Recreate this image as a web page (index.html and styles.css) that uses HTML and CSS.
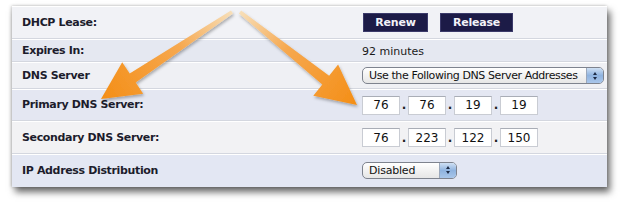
FILE: index.html
```html
<!DOCTYPE html>
<html>
<head>
<meta charset="utf-8">
<link rel="stylesheet" href="styles.css">
</head>
<body>
<div class="panel">
  <div class="row r1">
    <div class="label">DHCP Lease:</div>
    <div class="value"><span class="btn">Renew</span><span class="btn">Release</span></div>
  </div>
  <div class="row r2">
    <div class="label">Expires In:</div>
    <div class="value text">92 minutes</div>
  </div>
  <div class="row r3">
    <div class="label">DNS Server</div>
    <div class="value"><div class="select wide"><span class="sel-text">Use the Following DNS Server Addresses</span><span class="stepper"><i class="up"></i><i class="down"></i></span></div></div>
  </div>
  <div class="row r4">
    <div class="label">Primary DNS Server:</div>
    <div class="value ip"><span class="box">76</span><span class="dot">.</span><span class="box">76</span><span class="dot">.</span><span class="box">19</span><span class="dot">.</span><span class="box">19</span></div>
  </div>
  <div class="row r5">
    <div class="label">Secondary DNS Server:</div>
    <div class="value ip"><span class="box">76</span><span class="dot">.</span><span class="box">223</span><span class="dot">.</span><span class="box">122</span><span class="dot">.</span><span class="box">150</span></div>
  </div>
  <div class="row r6">
    <div class="label">IP Address Distribution</div>
    <div class="value"><div class="select narrow"><span class="sel-text">Disabled</span><span class="stepper"><i class="up"></i><i class="down"></i></span></div></div>
  </div>
</div>
<svg class="arrows" width="620" height="205" viewBox="0 0 620 205">
  <defs>
    <linearGradient id="gl" x1="232" y1="12" x2="101" y2="99" gradientUnits="userSpaceOnUse">
      <stop offset="0" stop-color="#f7dfb9"/>
      <stop offset="0.4" stop-color="#f6a84f"/>
      <stop offset="1" stop-color="#f48e16"/>
    </linearGradient>
    <linearGradient id="gr" x1="240" y1="12" x2="357" y2="105" gradientUnits="userSpaceOnUse">
      <stop offset="0" stop-color="#f7dfb9"/>
      <stop offset="0.4" stop-color="#f6a84f"/>
      <stop offset="1" stop-color="#f48e16"/>
    </linearGradient>
    <filter id="sh" x="-20%" y="-20%" width="140%" height="140%">
      <feDropShadow dx="1" dy="2" stdDeviation="1.5" flood-color="#000" flood-opacity="0.3"/>
    </filter>
  </defs>
  <polygon filter="url(#sh)" fill="url(#gl)" points="231,10.5 129.7,73.4 122.2,62.2 101,99 143.2,93.8 135.7,82.6 233,13.5"/>
  <polygon filter="url(#sh)" fill="url(#gr)" points="241.1,10.6 329.1,75.8 338.1,64.4 357,105 313.3,95.8 322.3,84.4 238.9,13.4"/>
</svg>
</body>
</html>
```

FILE: styles.css
```css
html, body {
  margin: 0;
  padding: 0;
  background: #ffffff;
  width: 620px;
  height: 205px;
  overflow: hidden;
}
body {
  position: relative;
  padding-top: 6px;
  padding-left: 12px;
  box-sizing: border-box;
  font-family: "DejaVu Sans", Verdana, sans-serif;
}
.panel {
  width: 595px;
  background: #eef0f4;
  box-shadow: 3px 5px 7px rgba(0,0,0,0.6), -1px 0 3px rgba(0,0,0,0.18), 0 -1px 2px rgba(0,0,0,0.06);
}
.row {
  display: grid;
  grid-template-columns: 350px 1fr;
  align-items: center;
  border-top: 1px solid #d4d7df;
  box-shadow: inset 0 1px 0 #ffffff;
  box-sizing: border-box;
}
.r1 { height: 32px; border-top: none; background: #f1f2f6; }
.r2 { height: 23px; background: #e5e8f1; }
.r3 { height: 27px; background: #eff0f4; }
.r4 { height: 32px; background: #e4e7f2; }
.r5 { height: 33px; background: #f2f2f4; }
.r6 { height: 34px; background: #e3e7f3; }
.label {
  padding-left: 10px;
  font-weight: bold;
  font-size: 11px;
  letter-spacing: -0.35px;
  color: #1c1c2c;
}
.value {
  display: flex;
  align-items: center;
}
.text {
  font-size: 11px;
  color: #1a1a1a;
  padding-top: 2px;
}
.r1 .value { gap: 12px; padding-left: 1px; padding-top: 1px; }
.btn {
  display: inline-flex;
  align-items: center;
  justify-content: center;
  height: 19px;
  box-sizing: border-box;
  background: #1c1b47;
  border: 1px solid #3b3a6a;
  color: #f2f2f8;
  font-weight: bold;
  font-size: 11px;
  letter-spacing: -0.2px;
}
.btn:first-child { width: 65px; }
.btn:last-child { width: 73px; }
.select {
  display: flex;
  align-items: center;
  height: 17px;
  box-sizing: border-box;
  border: 1px solid #7e838e;
  border-radius: 5px;
  background: linear-gradient(#ffffff, #f2f2f2 50%, #e6e6e6);
  overflow: hidden;
  position: relative;
}
.wide { width: 242px; margin-top: 1px; }
.narrow { width: 95px; margin-top: -1px; }
.sel-text {
  flex: 1;
  padding-left: 6px;
  font-size: 11px;
  letter-spacing: -0.4px;
  color: #111;
  white-space: nowrap;
}
.narrow .sel-text { letter-spacing: -0.2px; }
.stepper {
  width: 16px;
  height: 100%;
  background: linear-gradient(#cfe0f4, #8fb3df 50%, #a9c6ea);
  border-left: 1px solid #9aa7bb;
  display: flex;
  flex-direction: column;
  align-items: center;
  justify-content: center;
  gap: 2px;
}
.stepper i {
  display: block;
  width: 0;
  height: 0;
  border-left: 2.5px solid transparent;
  border-right: 2.5px solid transparent;
}
.stepper .up { border-bottom: 3px solid #1d2b45; }
.stepper .down { border-top: 3px solid #1d2b45; }
.ip { padding-top: 1px; }
.box {
  width: 38px;
  height: 19px;
  box-sizing: border-box;
  background: #ffffff;
  border: 1px solid #c9ccd3;
  border-top-color: #a9adb6;
  font-size: 12px;
  color: #111;
  display: flex;
  align-items: center;
  justify-content: center;
}
.dot {
  width: 8px;
  text-align: center;
  font-size: 12px;
  font-weight: bold;
  color: #222;
}
.arrows {
  position: absolute;
  left: 0;
  top: 0;
  pointer-events: none;
}
```
